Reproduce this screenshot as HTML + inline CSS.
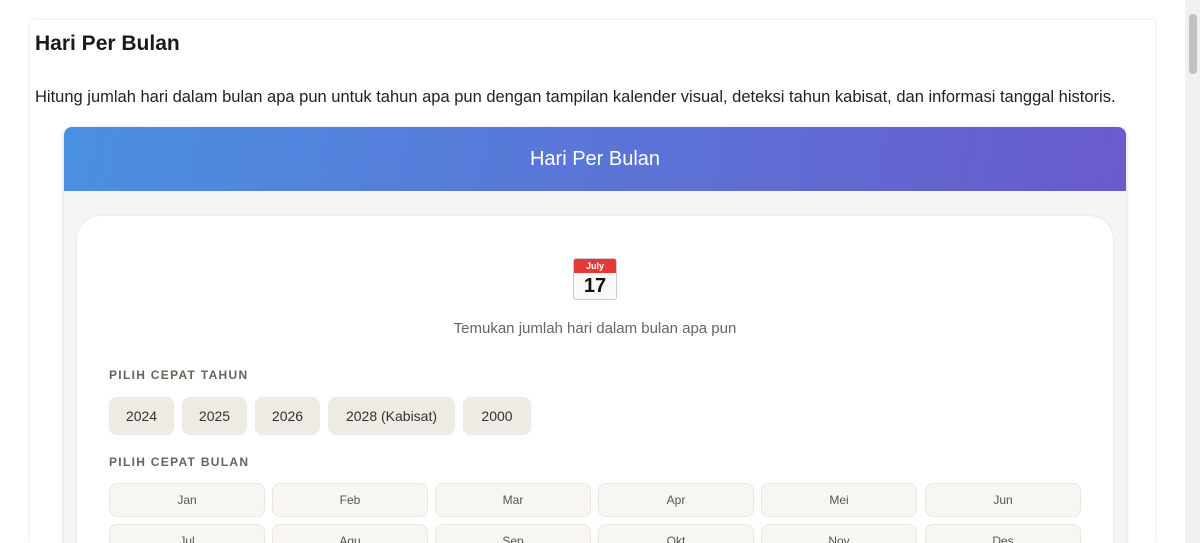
<!DOCTYPE html>
<html><head><meta charset="utf-8"><style>
html,body{margin:0;padding:0;background:#fff;overflow:hidden;width:1200px;height:543px;font-family:"Liberation Sans",sans-serif;color:#222}
.sb{position:absolute;right:0;top:0;width:15px;height:543px;background:#f1f1f1}
.sb div{position:absolute;left:4px;top:14px;width:8px;height:60px;border-radius:4px;background:#c1c1c1}
.outer{position:absolute;left:30px;top:20px;width:1125px;height:523px;background:#fff;box-shadow:0 0 4px rgba(0,0,0,.12);overflow:hidden}
h1{position:absolute;left:5px;top:12px;margin:0;font-size:21px;font-weight:bold;color:#1a1a1a}
p.d{position:absolute;left:5px;top:68px;margin:0;font-size:16.5px;color:#222;white-space:nowrap}
.w{position:absolute;left:34px;top:107px;width:1062px;height:420px;background:#f5f5f5;border-radius:8px 8px 0 0;box-shadow:0 1px 5px rgba(0,0,0,.2);overflow:hidden}
.hd{height:64px;background:linear-gradient(100deg,#4a90e2,#6a5acd);color:#fff;font-size:20px;text-align:center;line-height:64px}
.card{position:absolute;left:13px;top:89px;width:1036px;height:400px;background:#fff;border-radius:24px;box-shadow:0 0 3px rgba(0,0,0,.08)}
.cal{position:absolute;left:496px;top:42px;width:42px;height:40px;border:1px solid #ccc;border-radius:3px;background:#fafafa;overflow:hidden}
.cal .t{height:14px;background:#e53935;color:#fff;font-size:9px;font-weight:bold;text-align:center;line-height:14px}
.cal .n{font-size:20px;font-weight:bold;text-align:center;line-height:26px;color:#111}
.sub{position:absolute;left:0;width:100%;top:104px;text-align:center;font-size:15px;color:#666}
.lb{position:absolute;left:32px;font-size:12px;font-weight:bold;letter-spacing:1.3px;color:#6b625a}
.yb{position:absolute;top:181px;height:38px;line-height:38px;background:#eeeae4;border-radius:8px;font-size:14px;color:#333;text-align:center}
.mb{position:absolute;width:154px;height:32px;line-height:32px;border:1px solid #ebe7e0;background:#f8f6f2;border-radius:8px;font-size:12px;color:#555;text-align:center}
</style></head><body>
<div class="outer">
<h1>Hari Per Bulan</h1>
<p class="d">Hitung jumlah hari dalam bulan apa pun untuk tahun apa pun dengan tampilan kalender visual, deteksi tahun kabisat, dan informasi tanggal historis.</p>
<div class="w"><div class="hd">Hari Per Bulan</div>
<div class="card">
<div class="cal"><div class="t">July</div><div class="n">17</div></div>
<div class="sub">Temukan jumlah hari dalam bulan apa pun</div>
<div class="lb" style="top:152px">PILIH CEPAT TAHUN</div>
<div class="yb" style="left:32px;width:65px">2024</div>
<div class="yb" style="left:105px;width:65px">2025</div>
<div class="yb" style="left:178px;width:65px">2026</div>
<div class="yb" style="left:251px;width:127px">2028 (Kabisat)</div>
<div class="yb" style="left:386px;width:68px">2000</div>
<div class="lb" style="top:239px">PILIH CEPAT BULAN</div>
<div class="mb" style="left:32px;top:267px">Jan</div>
<div class="mb" style="left:195px;top:267px">Feb</div>
<div class="mb" style="left:358px;top:267px">Mar</div>
<div class="mb" style="left:521px;top:267px">Apr</div>
<div class="mb" style="left:684px;top:267px">Mei</div>
<div class="mb" style="left:848px;top:267px">Jun</div>
<div class="mb" style="left:32px;top:308px">Jul</div>
<div class="mb" style="left:195px;top:308px">Agu</div>
<div class="mb" style="left:358px;top:308px">Sep</div>
<div class="mb" style="left:521px;top:308px">Okt</div>
<div class="mb" style="left:684px;top:308px">Nov</div>
<div class="mb" style="left:848px;top:308px">Des</div>
</div></div>
</div>
<div class="sb"><div></div></div>
</body></html>
